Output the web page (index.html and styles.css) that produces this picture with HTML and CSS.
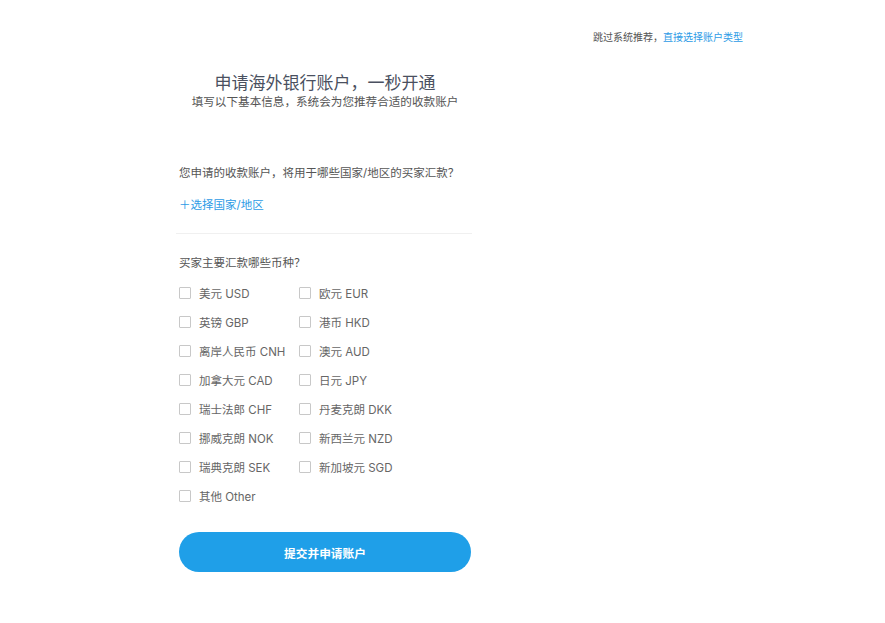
FILE: index.html
```html
<!DOCTYPE html>
<html lang="zh-CN">
<head>
<meta charset="utf-8">
<title>申请海外银行账户</title>
<link rel="stylesheet" href="styles.css">
</head>
<body>
<div class="topbar">
  <span class="skip">跳过系统推荐，</span><a class="link" href="#">直接选择账户类型</a>
</div>
<main class="form">
  <header class="head">
    <h1 class="title">申请海外银行账户，一秒开通</h1>
    <p class="subtitle">填写以下基本信息，系统会为您推荐合适的收款账户</p>
  </header>
  <p class="question q1">您申请的收款账户，将用于哪些国家/地区的买家汇款？</p>
  <a class="add" href="#">＋选择国家/地区</a>
  <div class="divider"></div>
  <p class="question q2">买家主要汇款哪些币种？</p>
  <div class="grid">
    <label class="opt"><span class="box"></span>美元 USD</label>
    <label class="opt"><span class="box"></span>欧元 EUR</label>
    <label class="opt"><span class="box"></span>英镑 GBP</label>
    <label class="opt"><span class="box"></span>港币 HKD</label>
    <label class="opt"><span class="box"></span>离岸人民币 CNH</label>
    <label class="opt"><span class="box"></span>澳元 AUD</label>
    <label class="opt"><span class="box"></span>加拿大元 CAD</label>
    <label class="opt"><span class="box"></span>日元 JPY</label>
    <label class="opt"><span class="box"></span>瑞士法郎 CHF</label>
    <label class="opt"><span class="box"></span>丹麦克朗 DKK</label>
    <label class="opt"><span class="box"></span>挪威克朗 NOK</label>
    <label class="opt"><span class="box"></span>新西兰元 NZD</label>
    <label class="opt"><span class="box"></span>瑞典克朗 SEK</label>
    <label class="opt"><span class="box"></span>新加坡元 SGD</label>
    <label class="opt"><span class="box"></span>其他 Other</label>
  </div>
  <button class="submit" type="button">提交并申请账户</button>
</main>
</body>
</html>
```
FILE: styles.css
```css
html, body {
  margin: 0;
  padding: 0;
  background: #fff;
}
body {
  font-family: "Inter", "Noto Sans CJK SC", sans-serif;
  color: #555;
}
.topbar {
  padding: 29px 142px 0 0;
  text-align: right;
  font-size: 10px;
  line-height: 16px;
  height: 16px;
}
.skip { color: #555; }
.link { color: #2d9be6; text-decoration: none; }
.form {
  width: 292px;
  margin-left: 179px;
}
.head {
  text-align: center;
  margin-top: 27px;
}
.title {
  margin: 0;
  font-size: 17px;
  font-weight: 400;
  line-height: 22px;
  color: #4a5060;
}
.subtitle {
  margin: 0;
  font-size: 11.6px;
  line-height: 16px;
  color: #555;
}
.question {
  margin: 0;
  font-size: 11.5px;
  line-height: 16px;
  color: #555;
}
.q1 { margin-top: 55px; }
.add {
  display: block;
  margin-top: 16px;
  font-size: 11.5px;
  line-height: 16px;
  color: #2d9be6;
  text-decoration: none;
}
.divider {
  margin-top: 20px;
  height: 1px;
  width: 296px;
  margin-left: -3px;
  background: #f0f0f0;
}
.q2 { margin-top: 21px; }
.grid {
  margin-top: 7px;
  display: grid;
  grid-template-columns: 120px 1fr;
  grid-auto-rows: 29px;
}
.opt {
  display: flex;
  align-items: center;
  gap: 8px;
  font-size: 11.5px;
  color: #666;
  white-space: nowrap;
}
.box {
  width: 10px;
  height: 10px;
  border: 1px solid #c8c8c8;
  border-radius: 1px;
  background: #fff;
  flex: none;
}
.submit {
  display: block;
  margin-top: 22px;
  width: 292px;
  height: 40px;
  border: 0;
  border-radius: 20px;
  background: #1f9fe8;
  color: #fff;
  font-family: "Noto Sans CJK SC", sans-serif;
  font-size: 11.7px;
  font-weight: 700;
  cursor: pointer;
}
```
